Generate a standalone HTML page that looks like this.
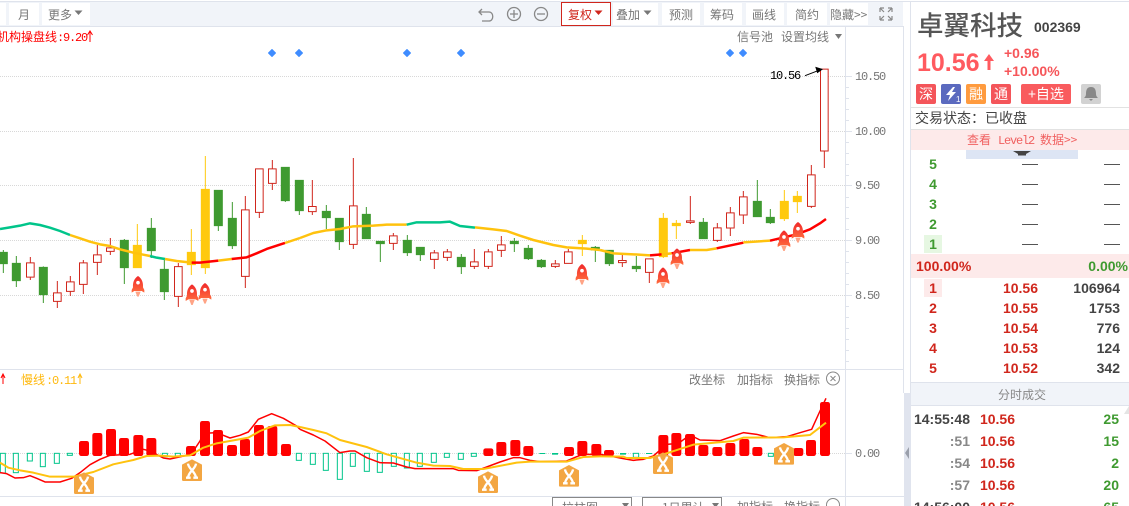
<!DOCTYPE html>
<html><head><meta charset="utf-8"><title>卓翼科技</title>
<style>
html,body{margin:0;padding:0;background:#fff;width:1129px;height:506px;overflow:hidden}
svg{display:block}
text{font-family:"WenQuanYi Zen Hei","Noto Sans CJK SC",sans-serif;font-size:12px;fill:#777}
.m{font-family:"Liberation Mono","WenQuanYi Zen Hei",monospace;font-size:12px;letter-spacing:-1.2px}
.b{font-family:"Liberation Sans",sans-serif;font-weight:bold;font-size:14px}
.r{fill:#d0261c}.g{fill:#3f9a30}.d{fill:#444}.y{fill:#999}
.c path{stroke-width:3}
.gc{fill:#3f9a30;stroke:#3f9a30}.rc{fill:#fff;stroke:#d0261c}.yc{fill:#ffc90e;stroke:#ffc90e}
.ma{fill:none;stroke-width:7.500;stroke-linejoin:round}
.mc{fill:none;stroke-width:4.500;stroke-linejoin:round}
.my{fill:none;stroke-width:6;stroke-linejoin:round}
.ho{fill:#fff;stroke:#00c58a;stroke-width:3}
</style></head><body>
<svg width="1129" height="506" viewBox="0 0 1129 506" xmlns="http://www.w3.org/2000/svg">
<defs>
<linearGradient id="rg" x1="0" y1="0" x2="0" y2="1"><stop offset="0" stop-color="#f0282a"/><stop offset="1" stop-color="#ff6b3d"/></linearGradient>
<g id="rk"><path d="M0 0C-12 8-16 20-15 34L-19 42V50L-11 45H11L19 50V42L15 34C16 20 12 8 0 0Z" fill="url(#rg)"/><circle cx="0" cy="20" r="5.500" fill="#fff"/><path d="M-8 47H8L2 62H-2Z" fill="#ffa486"/></g>
<g id="xi"><path d="M0 16L30 0L60 16V61Q60 65 56 65H4Q0 65 0 61Z" fill="#f3a642"/><path d="M18 13C20 30 40 36 42 55M42 13C40 30 20 36 18 55M12 55H26M34 55H48" fill="none" stroke="#fff" stroke-width="7"/></g>
</defs>

<!-- toolbar -->
<g shape-rendering="crispEdges">
<rect x="0" y="1" width="1129" height="1" fill="#dfe3ec"/>
<rect x="0" y="2" width="903" height="24" fill="#f1f4f9"/>
<rect x="0" y="26" width="904" height="1" fill="#dfe3ec"/>
<rect x="0" y="3" width="6" height="22" fill="#fff"/>
<rect x="9" y="3" width="30" height="22" fill="#fff"/>
<rect x="42" y="3" width="48" height="22" fill="#fff"/>
<rect x="613" y="3" width="45" height="22" fill="#fff"/>
<rect x="662" y="3" width="38" height="22" fill="#fff"/>
<rect x="704" y="3" width="38" height="22" fill="#fff"/>
<rect x="746" y="3" width="38" height="22" fill="#fff"/>
<rect x="787" y="3" width="40" height="22" fill="#fff"/>
<rect x="830" y="3" width="38" height="22" fill="#fff"/>
<rect x="561.5" y="2.5" width="49" height="23" fill="#fff" stroke="#d0261c"/>
</g>
<text x="18" y="19">月</text>
<text x="48" y="19">更多</text><path d="M74.500 10.500h8l-4 4.500z" fill="#777"/>
<path d="M482 9l-3 3 3 3M479 12h10c5 0 5 9 0 9h-7" fill="none" stroke="#888" stroke-width="1.300"/>
<circle cx="514" cy="14" r="6.500" fill="none" stroke="#888" stroke-width="1.300"/><path d="M510 14h8M514 10v8" stroke="#888" stroke-width="1.300"/>
<circle cx="541" cy="14" r="6.500" fill="none" stroke="#888" stroke-width="1.300"/><path d="M537 14h8" stroke="#888" stroke-width="1.300"/>
<text x="568" y="19" style="fill:#d0261c">复权</text><path d="M594.500 10.500h8l-4 4.500z" fill="#d0261c"/>
<text x="616" y="19">叠加</text><path d="M643.500 10.500h8l-4 4.500z" fill="#777"/>
<text x="669" y="19">预测</text>
<text x="710" y="19">筹码</text>
<text x="752" y="19">画线</text>
<text x="795" y="19">简约</text>
<text x="830" y="19">隐藏&gt;&gt;</text>
<path d="M880 8v4M880 8h4M880 8l4 4M892 8v4M892 8h-4M892 8l-4 4M880 20v-4M880 20h4M880 20l4-4M892 20v-4M892 20h-4M892 20l-4-4" fill="none" stroke="#888" stroke-width="1.200"/>

<!-- grid and axes -->
<g stroke="#d8d8d8" stroke-dasharray="1 1" shape-rendering="crispEdges">
<path d="M0 76.500H846M0 131.500H846M0 185.500H846M0 240.500H846M0 295.500H846M0 453.500H846"/>
</g>
<g shape-rendering="crispEdges" fill="none" stroke="#dfe3ec">
<path d="M845.500 27V506M903.500 27V393"/>
<path d="M846 87.500h3M846 98.500h3M846 109.500h3M846 120.500h3M846 142.500h3M846 153.500h3M846 164.500h3M846 175.500h3M846 197.500h3M846 207.500h3M846 218.500h3M846 229.500h3M846 251.500h3M846 262.500h3M846 273.500h3M846 284.500h3M846 306.500h3M846 317.500h3M846 328.500h3M846 339.500h3M846 350.500h3M846 361.500h3"/>
<path d="M846 76.500h6M846 131.500h6M846 185.500h6M846 240.500h6M846 295.500h6M846 453.500h6"/>
</g>
<text class="m" x="855" y="80">10.50</text><text class="m" x="855" y="135">10.00</text><text class="m" x="855" y="189">9.50</text><text class="m" x="855" y="244">9.00</text><text class="m" x="855" y="299">8.50</text><text class="m" x="855" y="457">0.00</text>

<text x="-3" y="41" style="fill:#f00">机构操盘线</text><text class="m" x="57" y="41" style="fill:#f00">:9.20</text><path d="M90 42V32M87.500 35L90 31L92.500 35" fill="none" stroke="#f00"/>
<text x="737" y="41">信号池</text><text x="781" y="41">设置均线</text><path d="M835 34h7l-3.500 5z" fill="#777"/>

<!-- diamonds -->
<g fill="#3f8cff" stroke="#3f8cff" stroke-width="1" stroke-linejoin="round"><path d="M272 49.500l3.500 3.500-3.500 3.500-3.500-3.500zM299 49.500l3.500 3.500-3.500 3.500-3.500-3.500zM407 49.500l3.500 3.500-3.500 3.500-3.500-3.500zM461 49.500l3.500 3.500-3.500 3.500-3.500-3.500zM730 49.500l3.500 3.500-3.500 3.500-3.500-3.500zM743 49.500l3.500 3.500-3.500 3.500-3.500-3.500z"/></g>

<!-- candles -->
<g class="c" transform="translate(0 150) scale(.33333)">
<path class="gc" d="M10 300V369M-2 307h24V341h-24zM49 318V411M37 340h24V392h-24zM130 349V459M118 352h24V434h-24zM373 267V402M361 271h24V353h-24zM454 204V324M442 235h24V302h-24zM493 330V450M481 358h24V425h-24zM655 120V243M643 121h24V227h-24zM697 156V297M685 205h24V287h-24zM856 51V156M844 52h24V152h-24zM898 90V195M886 91h24V182h-24z"/>
<path class="rc" d="M91 321V338M91 382V390M79.500 338.500h23V381.500h-23zM172 393V428M172 455V474M160.500 428.500h23V454h-23zM211 378V395M211 425V438M199.500 395.500h23V424h-23zM250 330V338M250 404V432M238.500 338.500h23V403h-23zM292 285V314M292 338V375M280.500 314.500h23V337h-23zM331 264V293M331 305V315M319.500 293.500h23V304h-23zM535 339V350M535 440V471M523.500 350h23V439h-23zM736 138V179M736 380V414M724.500 179.500h23V379h-23zM778 188V204M766.500 56.500h23V187h-23zM817 30V56M817 101V120M805.500 56.500h23V100h-23z"/>
<path class="yc" d="M412 222V354M400 286h24V353h-24zM574 237V375M562 307h24V344h-24zM616 18V372M604 118h24V353h-24z"/>
</g>
<g class="c" transform="translate(300 150) scale(.33333)">
<path class="gc" d="M79 165V237M67 184h24V203h-24zM118 204V300M106 205h24V275h-24zM199 171V267M187 193h24V266h-24zM241 273V336M229 274h24V281h-24zM322 255V318M310 271h24V308h-24zM361 291V333M349 292h24V314h-24zM484 312V372M472 322h24V350h-24zM643 264V306M631 274h24V281h-24zM685 285V330M673 295h24V326h-24zM724 327V354M712 331h24V350h-24zM886 288V336M874 292h24V300h-24z"/>
<path class="rc" d="M37 90V169M37 186V195M25.500 169.500h23V185h-23zM160 24V167M160 284V297M148.500 167.500h23V283h-23zM280 249V257M280 281V300M268.500 257.500h23V280h-23zM403 300V308M403 329V357M391.500 308.500h23V328h-23zM442 297V305M442 323V333M430.500 305.500h23V322h-23zM523 297V335M523 350V357M511.500 335.500h23V349h-23zM565 297V305M565 350V357M553.500 305.500h23V349h-23zM604 258V284M604 302V321M592.500 284.500h23V301h-23zM766 330V341M766 350V354M754.500 341.500h23V349h-23zM805 297V305M793.500 305.500h23V340h-23z"/>
<path class="yc" d="M847 255V318M835 271h24V281h-24z"/>
</g>
<g class="c" transform="translate(600 150) scale(.33333)">
<path class="gc" d="M28 300V348M16 301h24V341h-24zM109 318V366M97 349h24V356h-24zM310 204V267M298 217h24V266h-24zM472 90V201M460 154h24V200h-24zM511 177V222M499 202h24V218h-24z"/>
<path class="rc" d="M67 315V331M67 339V351M55.500 331.500h23V338h-23zM148 368V399M136.500 326.500h23V367h-23zM271 138V212M271 218V222M259.500 212.500h23V217h-23zM352 219V233M352 272V276M340.500 233.500h23V271h-23zM391 171V188M391 235V258M379.500 188.500h23V234h-23zM430 123V140M430 196V222M418.500 140.500h23V195h-23zM634 45V74M634 170V174M622.500 74.500h23V169h-23zM673 4V54M661.500 -242.500h23V3h-23z"/>
<path class="yc" d="M190 189V324M178 205h24V320h-24zM229 210V267M217 220h24V227h-24zM553 120V213M541 154h24V206h-24zM592 123V189M580 139h24V155h-24z"/>
</g>

<!-- MA line -->
<g transform="translate(0 150) scale(.33333)">
<path class="ma" stroke="#00c58a" d="M0 237L30 232L60 227L90 220L120 225L150 233L180 243L210 255"/>
<path class="ma" stroke="#ffc20e" d="M210 255L240 265L270 275L300 283L330 288L360 298L400 308L430 314L450 318"/>
<path class="ma" stroke="#00c58a" d="M450 318L470 323L495 327"/>
<path class="ma" stroke="#ffc20e" d="M495 327L530 333L575 338"/>
<path class="ma" stroke="#f00" d="M575 338L600 338L655 332"/>
<path class="ma" stroke="#ffc20e" d="M655 332L695 327"/>
<path class="ma" stroke="#f00" d="M695 327L740 322L770 310L800 297L855 279"/>
<path class="ma" stroke="#ffc20e" d="M855 279L900 264"/>
</g>
<g transform="translate(300 150) scale(.33333)">
<path class="ma" stroke="#ffc20e" d="M0 264L40 249L80 241L120 237L160 229L220 227L260 224L320 224"/>
<path class="ma" stroke="#00c58a" d="M320 224L350 217L420 217L450 215L480 228L525 233"/>
<path class="ma" stroke="#ffc20e" d="M525 232L580 238L620 243L660 257L700 270L760 285L800 292L860 296L900 300"/>
</g>
<g transform="translate(600 150) scale(.33333)">
<path class="ma" stroke="#ffc20e" d="M0 300L40 310L100 313L150 316"/>
<path class="ma" stroke="#f00" d="M150 316L185 313"/>
<path class="ma" stroke="#ffc20e" d="M185 313L215 310"/>
<path class="ma" stroke="#f00" d="M215 310L270 300"/>
<path class="ma" stroke="#ffc20e" d="M270 300L320 300L350 295"/>
<path class="ma" stroke="#f00" d="M350 295L430 278"/>
<path class="ma" stroke="#ffc20e" d="M430 277L510 272"/>
<path class="ma" stroke="#f00" d="M510 272L590 253L630 238L660 220L678 207"/>
</g>

<!-- rockets -->
<g transform="translate(0 150) scale(.33333)"><use href="#rk" x="414" y="378"/><use href="#rk" x="576" y="403"/><use href="#rk" x="615" y="399"/></g>
<g transform="translate(300 150) scale(.33333)"><use href="#rk" x="846" y="342"/></g>
<g transform="translate(600 150) scale(.33333)"><use href="#rk" x="189" y="352"/><use href="#rk" x="231" y="295"/><use href="#rk" x="552" y="241"/><use href="#rk" x="594" y="216"/></g>

<text class="m" x="770" y="79" style="fill:#000">10.56</text>
<path d="M805 75.700L818 70.700" stroke="#000"/><path d="M822 69.300L816 67.500L817.500 72.500Z" fill="#000" stroke="#000"/>

<!-- MACD pane -->
<g shape-rendering="crispEdges"><rect x="0" y="369" width="904" height="1" fill="#dfe3ec"/><rect x="0" y="496" width="904" height="1" fill="#dfe3ec"/></g>
<path d="M3 384V375M1 378L3 374L5 378" fill="none" stroke="#f00"/>
<text x="21" y="384" style="fill:#ffb90f">慢线</text><text class="m" x="46" y="384" style="fill:#ffb90f">:0.11</text><path d="M80 384V375M78 378L80 374L82 378" fill="none" stroke="#ffb90f"/>
<text x="689" y="384">改坐标</text><text x="737" y="384">加指标</text><text x="784" y="384">换指标</text>
<circle cx="833" cy="378.500" r="6.500" fill="none" stroke="#888"/><path d="M830.500 376l5 5M835.500 376l-5 5" stroke="#888"/>

<g transform="translate(0 366) scale(.33333)">
<g fill="#f00"><rect x="237" y="225" width="30" height="45" rx="7"/><rect x="277" y="201" width="30" height="69" rx="7"/><rect x="318" y="189" width="30" height="81" rx="7"/><rect x="357" y="216" width="30" height="54" rx="7"/><rect x="400" y="207" width="30" height="63" rx="7"/><rect x="439" y="216" width="30" height="54" rx="7"/><rect x="558" y="240" width="30" height="30" rx="7"/><rect x="600" y="165" width="30" height="105" rx="7"/><rect x="639" y="192" width="30" height="78" rx="7"/><rect x="681" y="237" width="30" height="33" rx="7"/><rect x="720" y="219" width="30" height="51" rx="7"/><rect x="762" y="177" width="30" height="93" rx="7"/><rect x="802" y="180" width="30" height="90" rx="7"/><rect x="843" y="234" width="30" height="36" rx="7"/></g>
<g class="ho"><rect x="1" y="262" width="15" height="59"/><rect x="40" y="262" width="15" height="58"/><rect x="82" y="262" width="15" height="23"/><rect x="121" y="262" width="15" height="40"/><rect x="163" y="262" width="15" height="30"/><rect x="202" y="262" width="15" height="6"/><rect x="487" y="262" width="15" height="10"/><rect x="526" y="262" width="15" height="8"/><rect x="889" y="262" width="15" height="21"/></g>
<path class="mc" stroke="#f00" d="M0 320L20 323L45 336L70 335L90 329L110 337L135 348L180 348L215 337L240 320L270 296L300 280L330 268L390 265L430 250L450 255L490 276L510 279L560 268L580 255L600 225L610 202L650 200L690 216L720 208L745 198L775 160L815 143L850 157L890 180L900 190"/>
<path class="my" stroke="#ffc20e" d="M0 290L25 305L60 313L100 320L150 332L220 332L280 318L340 295L400 282L440 270L480 269L520 272L570 268L610 245L650 232L700 223L745 215L780 195L825 178L870 177L900 183"/>
<use href="#xi" x="222" y="319"/><use href="#xi" x="546" y="280"/>
</g>
<g transform="translate(300 366) scale(.33333)">
<g class="ho"><rect x="31" y="262" width="15" height="33"/><rect x="70" y="262" width="15" height="51"/><rect x="112" y="262" width="15" height="78"/><rect x="151" y="262" width="15" height="39"/><rect x="193" y="262" width="15" height="54"/><rect x="232" y="262" width="15" height="57"/><rect x="274" y="262" width="15" height="39"/><rect x="313" y="262" width="15" height="44"/><rect x="352" y="262" width="15" height="39"/><rect x="394" y="262" width="15" height="27"/><rect x="433" y="262" width="15" height="12"/><rect x="475" y="262" width="15" height="18"/><rect x="514" y="262" width="15" height="9"/></g>
<g fill="#00c58a"><rect x="718" y="261" width="18" height="3"/><rect x="756" y="261" width="18" height="5"/></g>
<g fill="#f00"><rect x="550" y="247" width="30" height="23" rx="7"/><rect x="589" y="228" width="30" height="42" rx="7"/><rect x="631" y="222" width="30" height="48" rx="7"/><rect x="670" y="240" width="30" height="30" rx="7"/><rect x="792" y="243" width="30" height="27" rx="7"/><rect x="832" y="225" width="30" height="45" rx="7"/><rect x="874" y="234" width="30" height="36" rx="7"/></g>
<path class="mc" stroke="#f00" d="M0 190L40 207L75 225L120 260L150 255L165 255L200 275L240 290L280 291L320 303L345 308L460 308L475 313L530 314L560 303L600 288L640 275L660 275L690 283L720 287L800 285L830 272L850 265L900 265"/>
<path class="my" stroke="#ffc20e" d="M0 183L40 192L80 202L120 222L200 243L260 265L350 290L400 299L450 300L490 309L550 309L650 290L690 287L800 287L850 273L900 271"/>
<use href="#xi" x="534" y="316"/><use href="#xi" x="777" y="297"/>
</g>
<g transform="translate(600 366) scale(.33333)">
<g fill="#f00"><rect x="12" y="252" width="30" height="18" rx="7"/><rect x="175" y="207" width="30" height="63" rx="7"/><rect x="214" y="201" width="30" height="69" rx="7"/><rect x="255" y="204" width="30" height="66" rx="7"/><rect x="295" y="237" width="30" height="33" rx="7"/><rect x="337" y="243" width="30" height="27" rx="7"/><rect x="376" y="231" width="30" height="39" rx="7"/><rect x="418" y="219" width="30" height="51" rx="7"/><rect x="457" y="243" width="30" height="27" rx="7"/><rect x="580" y="246" width="30" height="24" rx="7"/><rect x="618" y="222" width="30" height="48" rx="7"/><rect x="660" y="108" width="30" height="162" rx="7"/></g>
<g fill="#00c58a"><rect x="60" y="261" width="18" height="5"/><rect x="138" y="261" width="18" height="3"/></g>
<g class="ho"><rect x="100" y="262" width="16" height="12"/><rect x="505" y="262" width="15" height="9"/></g>
<path class="mc" stroke="#f00" d="M0 265L20 268L70 278L100 283L130 280L160 270L200 235L235 232L270 207L300 222L360 224L400 210L430 200L470 205L510 215L560 212L600 200L635 190L660 135L678 97"/>
<path class="my" stroke="#ffc20e" d="M0 271L70 272L80 276L150 276L200 262L280 236L400 225L430 215L550 214L630 207L678 170"/>
<use href="#xi" x="159" y="259"/><use href="#xi" x="522" y="231"/>
</g>

<!-- bottom row -->
<path d="M552.500 506V497.500H631.500V506M642.500 506V497.500H721.500V506" fill="none" stroke="#888" shape-rendering="crispEdges"/>
<text x="562" y="512">拉柱图</text><path d="M622 503h7l-3.500 5z" fill="#777"/>
<text x="662" y="512">1日累计</text><path d="M712 503h7l-3.500 5z" fill="#777"/>
<text x="737" y="511">加指标</text><text x="784" y="511">换指标</text>
<circle cx="833" cy="505" r="6.500" fill="none" stroke="#888"/>

<!-- right panel -->
<g shape-rendering="crispEdges">
<rect x="910" y="2" width="1" height="391" fill="#dfe3ec"/>
<rect x="904" y="393" width="7" height="113" fill="#e0e4ee"/>
<rect x="911" y="107" width="218" height="1" fill="#e2e2e2"/>
<rect x="911" y="129" width="218" height="1" fill="#e2e2e2"/>
<rect x="911" y="130" width="218" height="20" fill="#fdeaea"/>
<rect x="966" y="150" width="112" height="9" fill="#dde5f4"/>
<rect x="924" y="235" width="18" height="18" fill="#e6f7e2"/>
<rect x="911" y="254" width="218" height="24" fill="#fdeaea"/>
<rect x="924" y="279" width="18" height="18" fill="#fdeaea"/>
<rect x="911" y="382" width="218" height="1" fill="#dfe3ec"/>
<rect x="911" y="383" width="218" height="22" fill="#f1f4f9"/>
<rect x="911" y="405" width="218" height="1" fill="#dfe3ec"/>
</g>
<path d="M909 447V459L905 453Z" fill="#9a9fab"/>
<path d="M1129 406V414H1124Z" fill="#e4e4e4"/>
<path d="M1013 151h18l-5 3h-8z" fill="#444"/><rect x="1018" y="154" width="8" height="1.500" fill="#444"/>

<text x="917" y="35" style="font-family:'Noto Sans CJK SC',sans-serif;font-size:26.500px;font-weight:500;fill:#555">卓翼科技</text>
<text class="b" x="1034" y="32" style="fill:#444">002369</text>
<text class="b" x="917" y="71" style="font-size:25px;fill:#ff5a5f">10.56</text>
<path d="M989 70V59" stroke="#ff5a5f" stroke-width="3"/><path d="M984 61L989 54L994 61Z" fill="#ff5a5f"/>
<text class="b" x="1004" y="58" style="fill:#f6565a">+0.96</text>
<text class="b" x="1004" y="76" style="fill:#f6565a">+10.00%</text>

<rect x="916" y="84" width="20" height="20" rx="2" fill="#f4555a"/><text x="926" y="99" text-anchor="middle" style="fill:#fff;font-size:14px">深</text>
<rect x="941" y="84" width="20" height="20" rx="2" fill="#5b6abf"/><path d="M953 87L946 95H950L948 101L956 92H952L955 87Z" fill="#fff"/><text x="956" y="102" style="fill:#fff;font-size:8px;font-family:'Liberation Sans'">1</text>
<rect x="966" y="84" width="20" height="20" rx="2" fill="#ff9b3e"/><text x="976" y="99" text-anchor="middle" style="fill:#fff;font-size:14px">融</text>
<rect x="991" y="84" width="20" height="20" rx="2" fill="#f4555a"/><text x="1001" y="99" text-anchor="middle" style="fill:#fff;font-size:14px">通</text>
<rect x="1021" y="84" width="50" height="20" rx="2" fill="#f95b5e"/><text x="1046" y="99" text-anchor="middle" style="fill:#fff;font-size:14px">+自选</text>
<rect x="1081" y="84" width="20" height="20" rx="2" fill="#d2d2d2"/><path d="M1091 87C1087 87 1086 90 1086 94C1086 96 1085 97 1084 98H1098C1097 97 1096 96 1096 94C1096 90 1095 87 1091 87ZM1089 99H1093L1091 101Z" fill="#888"/>

<text x="915" y="123" style="font-size:14px;fill:#444">交易状态：已收盘</text>
<text x="967" y="144" style="fill:#f06060">查看</text><text class="m" x="998" y="144" style="fill:#f06060">Level2</text><text x="1040" y="144" style="fill:#f06060">数据&gt;&gt;</text>

<g text-anchor="middle" class="b">
<text class="b g" x="933" y="169">5</text><text class="b g" x="933" y="189">4</text><text class="b g" x="933" y="209">3</text><text class="b g" x="933" y="229">2</text><text class="b g" x="933" y="249">1</text>
<text class="b r" x="933" y="293">1</text><text class="b r" x="933" y="313">2</text><text class="b r" x="933" y="333">3</text><text class="b r" x="933" y="353">4</text><text class="b r" x="933" y="373">5</text>
</g>
<path d="M1022 164.500h16M1104 164.500h16M1022 184.500h16M1104 184.500h16M1022 204.500h16M1104 204.500h16M1022 224.500h16M1104 224.500h16M1022 244.500h16M1104 244.500h16" stroke="#555" shape-rendering="crispEdges"/>
<text class="b r" x="916" y="271">100.00%</text>
<text class="b g" x="1128" y="271" text-anchor="end">0.00%</text>
<g text-anchor="end">
<text class="b r" x="1038" y="293">10.56</text><text class="b d" x="1120" y="293">106964</text>
<text class="b r" x="1038" y="313">10.55</text><text class="b d" x="1120" y="313">1753</text>
<text class="b r" x="1038" y="333">10.54</text><text class="b d" x="1120" y="333">776</text>
<text class="b r" x="1038" y="353">10.53</text><text class="b d" x="1120" y="353">124</text>
<text class="b r" x="1038" y="373">10.52</text><text class="b d" x="1120" y="373">342</text>
</g>
<text x="998" y="399" style="fill:#888">分时成交</text>
<g text-anchor="end">
<text class="b d" x="970" y="424">14:55:48</text><text class="b" x="970" y="446" style="fill:#888">:51</text><text class="b" x="970" y="468" style="fill:#888">:54</text><text class="b" x="970" y="490" style="fill:#888">:57</text><text class="b d" x="970" y="512">14:56:00</text>
<text class="b r" x="1015" y="424">10.56</text><text class="b r" x="1015" y="446">10.56</text><text class="b r" x="1015" y="468">10.56</text><text class="b r" x="1015" y="490">10.56</text><text class="b r" x="1015" y="512">10.56</text>
<text class="b g" x="1119" y="424">25</text><text class="b g" x="1119" y="446">15</text><text class="b g" x="1119" y="468">2</text><text class="b g" x="1119" y="490">20</text><text class="b g" x="1119" y="512">65</text>
</g>
</svg>
</body></html>
